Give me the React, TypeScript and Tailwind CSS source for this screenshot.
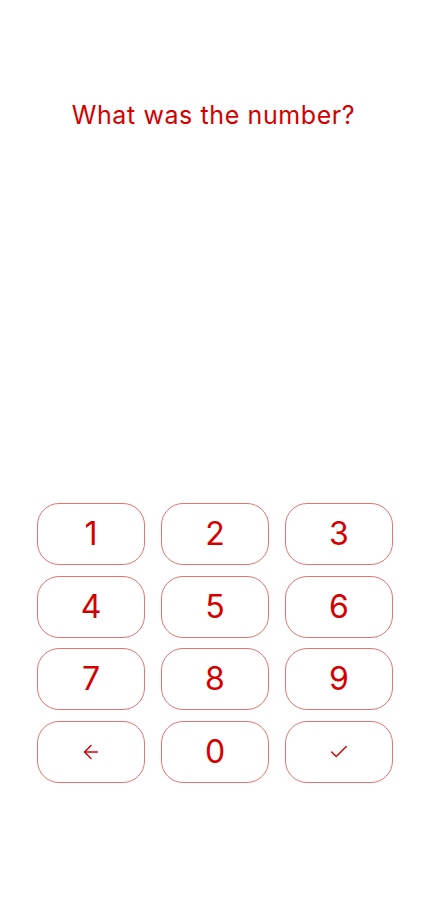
import { ArrowLeft, Check } from "lucide-react";

const keys = ["1", "2", "3", "4", "5", "6", "7", "8", "9", "back", "0", "ok"];

function Key({ k }: { k: string }) {
  return (
    <button className="h-[62px] rounded-[22px] border border-[#e57373] flex items-center justify-center text-[#d40000] text-[32px] bg-white">
      {k === "back" ? (
        <ArrowLeft size={22} strokeWidth={1.6} />
      ) : k === "ok" ? (
        <Check size={22} strokeWidth={1.6} />
      ) : (
        k
      )}
    </button>
  );
}

export default function App() {
  return (
    <main
      className="w-[427px] h-[900px] bg-white flex flex-col"
      style={{ fontFamily: "Inter, 'Noto Sans', sans-serif" }}
    >
      <p className="mt-[99px] text-center text-[25px] font-normal tracking-[0.6px] text-[#d40000] leading-[32px]">
        What was the number?
      </p>

      <div className="mt-[372px] ml-[37px] w-[356px] grid grid-cols-3 gap-x-4 gap-y-[10.5px]">
        {keys.map((k) => (
          <Key key={k} k={k} />
        ))}
      </div>
    </main>
  );
}
